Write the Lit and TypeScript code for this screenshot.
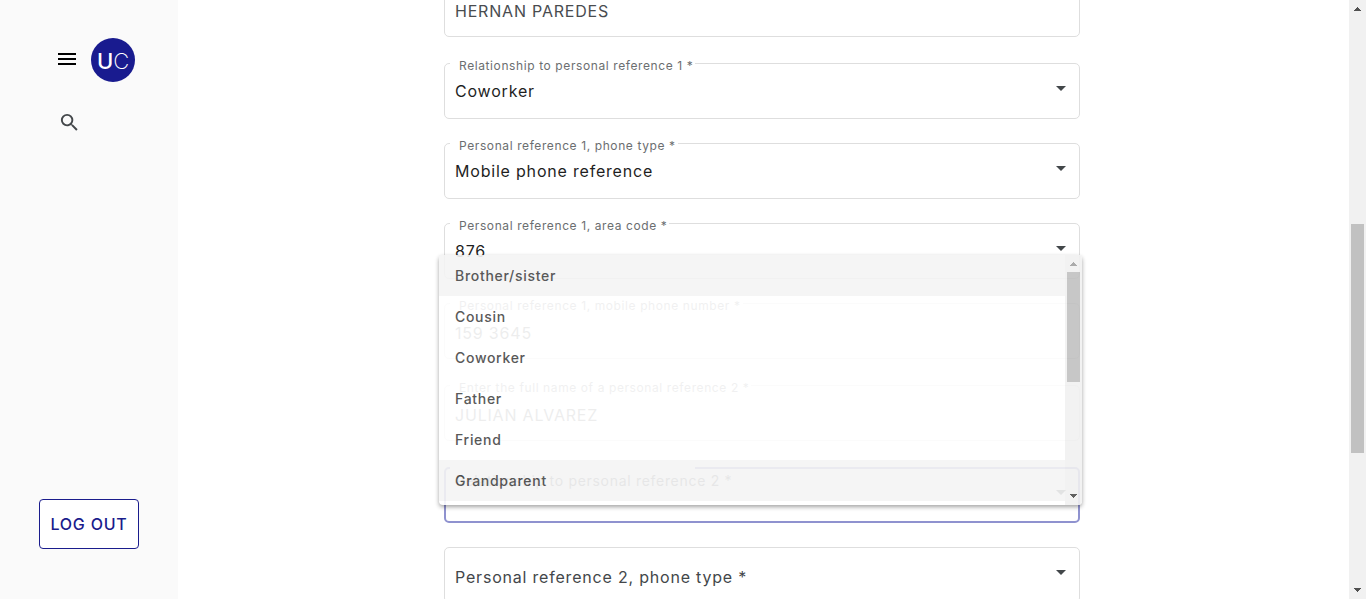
import { LitElement, html, css, nothing } from "lit";
import { customElement, property } from "lit/decorators.js";
import { classMap } from "lit/directives/class-map.js";

@customElement("scroll-rail")
class ScrollRail extends LitElement {
  @property({ type: Number }) before = 0;
  @property({ type: Number }) thumb = 0;
  @property({ type: Number }) after = 0;
  @property({ type: Boolean }) atTop = false;

  static styles = css`
    :host {
      display: flex;
      flex-direction: column;
      width: 17px;
      flex: none;
      background: #f1f1f1;
    }
    .arrow {
      display: block;
      width: 17px;
      height: 17px;
      flex: none;
      fill: #505050;
    }
    .dim {
      fill: #a3a3a3;
    }
    .track {
      flex: 1;
      display: flex;
      flex-direction: column;
      padding: 0 2px;
    }
    .thumb {
      background: #c1c1c1;
    }
  `;

  render() {
    return html`
      <svg class=${classMap({ arrow: true, dim: this.atTop })} viewBox="0 0 17 17" shape-rendering="crispEdges">
        <path d="M8 7h1v1h1v1h1v1h1v1H5v-1h1V9h1V8h1z" />
      </svg>
      <div class="track">
        <div style="flex:${this.before}"></div>
        <div class="thumb" style="flex:${this.thumb}"></div>
        <div style="flex:${this.after}"></div>
      </div>
      <svg class="arrow" viewBox="0 0 17 17" shape-rendering="crispEdges">
        <path d="M5 6h7v1h-1v1h-1v1H9v1H8V9H7V8H6V7H5z" />
      </svg>
    `;
  }
}

@customElement("form-field")
class FormField extends LitElement {
  @property() label = "";
  @property() value = "";
  @property() kind: "text" | "select" = "select";
  @property({ type: Boolean }) open = false;

  static styles = css`
    :host {
      display: block;
      position: relative;
      margin-bottom: 24px;
    }
    :host([kind="text"]) {
      margin-bottom: 26px;
    }
    .box {
      box-sizing: border-box;
      height: 56px;
      display: flex;
      border: 1px solid #dedede;
      border-radius: 5px;
      background: #fff;
    }
    .focused {
      border: 2px solid #8f92cf;
    }
    .control {
      flex: 1;
      min-width: 0;
      box-sizing: border-box;
      margin: 0;
      padding: 0 10px;
      border: 0;
      outline: 0;
      background: transparent;
      appearance: none;
      font: 400 16px/24px Inter, "Liberation Sans", sans-serif;
      letter-spacing: 0.05em;
      color: #1f1f1f;
    }
    .typed {
      padding-top: 4px;
      color: #494c4f;
    }
    .empty {
      padding-top: 4px;
      color: #43474a;
    }
    .label {
      position: absolute;
      top: -5px;
      left: 6px;
      padding: 0 2px 0 9px;
      background: #fff;
      font: 400 12px/15px Inter, "Liberation Sans", sans-serif;
      letter-spacing: 0.05em;
      color: #6b6e70;
      white-space: nowrap;
    }
    .moving {
      top: 0;
      padding: 5px 0 0 6px;
      background: none;
      font-size: 14px;
      line-height: 18px;
    }
    .notch {
      position: absolute;
      top: 0;
      left: 6px;
      width: 245px;
      height: 2px;
      background: #fff;
    }
    .caret {
      position: absolute;
      top: 23px;
      right: 14px;
      width: 10px;
      height: 5px;
      fill: #43474a;
      pointer-events: none;
    }
  `;

  render() {
    const floating = this.value !== "" || this.open;
    return html`
      <div class=${classMap({ box: true, focused: this.open })}>
        ${this.kind === "text"
          ? html`<input id="control" class="control typed" type="text" .value=${this.value} />`
          : html`<select
              id="control"
              class=${classMap({ control: true, empty: !floating })}
              aria-label=${this.label}
            >
              <option>${floating ? this.value : this.label}</option>
            </select>`}
      </div>
      ${this.open ? html`<span class="notch"></span>` : nothing}
      ${floating
        ? html`<label for="control" class=${classMap({ label: true, moving: this.open })}>${this.label}</label>`
        : nothing}
      ${this.kind === "select"
        ? html`<svg class="caret" viewBox="0 0 10 5"><path d="M0 0h10L5 5z" /></svg>`
        : nothing}
      <slot></slot>
    `;
  }
}

@customElement("option-panel")
class OptionPanel extends LitElement {
  @property({ attribute: false }) options: string[] = [];
  @property({ attribute: false }) shaded: string[] = [];

  static styles = css`
    :host {
      position: absolute;
      z-index: 2;
      left: -5px;
      right: -2px;
      bottom: 18px;
      display: flex;
      overflow: hidden;
      border-radius: 4px;
      background: #fff;
      opacity: 0.9;
      box-shadow: 0 2px 4px rgba(0, 0, 0, 0.4);
    }
    .list {
      flex: 1;
      display: flex;
      flex-direction: column;
      padding-bottom: 4px;
    }
    .option {
      height: 41px;
      padding: 0 16px;
      border: 0;
      background: transparent;
      text-align: left;
      font: 500 14px/20px Inter, "Liberation Sans", sans-serif;
      letter-spacing: 0.05em;
      color: #484848;
    }
    .shaded {
      background: #f4f4f4;
    }
  `;

  render() {
    return html`
      <div class="list" role="listbox" aria-label="Relationship">
        ${this.options.map(
          (o) => html`<button
            type="button"
            role="option"
            class=${classMap({ option: true, shaded: this.shaded.includes(o) })}
          >${o}</button>`
        )}
      </div>
      <scroll-rail .before=${0} .thumb=${110} .after=${106} .atTop=${true}></scroll-rail>
    `;
  }
}

@customElement("app-root")
class AppRoot extends LitElement {
  static styles = css`
    :host {
      display: flex;
      height: 100vh;
      overflow: hidden;
      background: #fff;
      font-family: Inter, "Liberation Sans", sans-serif;
    }
    .side {
      box-sizing: border-box;
      width: 178px;
      flex: none;
      display: flex;
      flex-direction: column;
      padding: 38px 39px 50px;
      background: #fafafa;
    }
    .brand {
      display: flex;
      align-items: center;
      gap: 12px;
      padding-left: 16px;
    }
    .icon {
      display: block;
      padding: 0;
      border: 0;
      background: none;
    }
    .icon svg {
      display: block;
    }
    .menu {
      margin-bottom: 2px;
    }
    .search {
      align-self: flex-start;
      margin: 29px 0 0 19px;
    }
    .logo {
      display: flex;
      align-items: center;
      justify-content: center;
      width: 44px;
      height: 44px;
      flex: none;
      border-radius: 50%;
      background: #191b8f;
      color: #fff;
      text-decoration: none;
      font-size: 22px;
      line-height: 28px;
      padding-top: 2px;
      box-sizing: border-box;
    }
    .bold {
      font-weight: 500;
    }
    .thin {
      font-weight: 200;
    }
    .logout {
      height: 50px;
      margin-top: auto;
      padding: 0;
      border: 1px solid #1a1c8c;
      border-radius: 4px;
      background: #fff;
      color: #1a1c8c;
      font: 500 16px/24px Inter, "Liberation Sans", sans-serif;
      letter-spacing: 0.05em;
    }
    .main {
      flex: 1;
      min-width: 0;
      padding-right: 3px;
    }
    .form {
      max-width: 636px;
      margin: -19px auto 0;
    }
  `;

  render() {
    return html`
      <nav class="side">
        <div class="brand">
          <button class="icon menu" type="button" aria-label="Menu">
            <svg width="24" height="24" viewBox="0 0 24 24"><path d="M3 18h18v-2H3v2zm0-5h18v-2H3v2zm0-7v2h18V6H3z" /></svg>
          </button>
          <a class="logo" href="#"><span class="bold">U</span><span class="thin">C</span></a>
        </div>
        <button class="icon search" type="button" aria-label="Search">
          <svg width="23" height="23" viewBox="0 0 24 24" fill="#43474a">
            <path d="M15.5 14h-.79l-.28-.27A6.47 6.47 0 0 0 16 9.5 6.5 6.5 0 1 0 9.5 16c1.61 0 3.09-.59 4.23-1.57l.27.28v.79l5 4.99L20.49 19l-4.99-5zm-6 0C7.01 14 5 11.99 5 9.5S7.01 5 9.5 5 14 7.01 14 9.5 11.99 14 9.5 14z" />
          </svg>
        </button>
        <button class="logout" type="button">LOG OUT</button>
      </nav>
      <main class="main">
        <form class="form">
          <form-field kind="text" label="Enter the full name of a personal reference 1 *" value="HERNAN PAREDES"></form-field>
          <form-field label="Relationship to personal reference 1 *" value="Coworker"></form-field>
          <form-field label="Personal reference 1, phone type *" value="Mobile phone reference"></form-field>
          <form-field label="Personal reference 1, area code *" value="876"></form-field>
          <form-field kind="text" label="Personal reference 1, mobile phone number *" value="159 3645"></form-field>
          <form-field kind="text" label="Enter the full name of a personal reference 2 *" value="JULIAN ALVAREZ"></form-field>
          <form-field label="Relationship to personal reference 2 *" open>
            <option-panel
              .options=${["Brother/sister", "Cousin", "Coworker", "Father", "Friend", "Grandparent"]}
              .shaded=${["Brother/sister", "Grandparent"]}
            ></option-panel>
          </form-field>
          <form-field label="Personal reference 2, phone type *"></form-field>
        </form>
      </main>
      <scroll-rail .before=${207} .thumb=${229} .after=${129}></scroll-rail>
    `;
  }
}
